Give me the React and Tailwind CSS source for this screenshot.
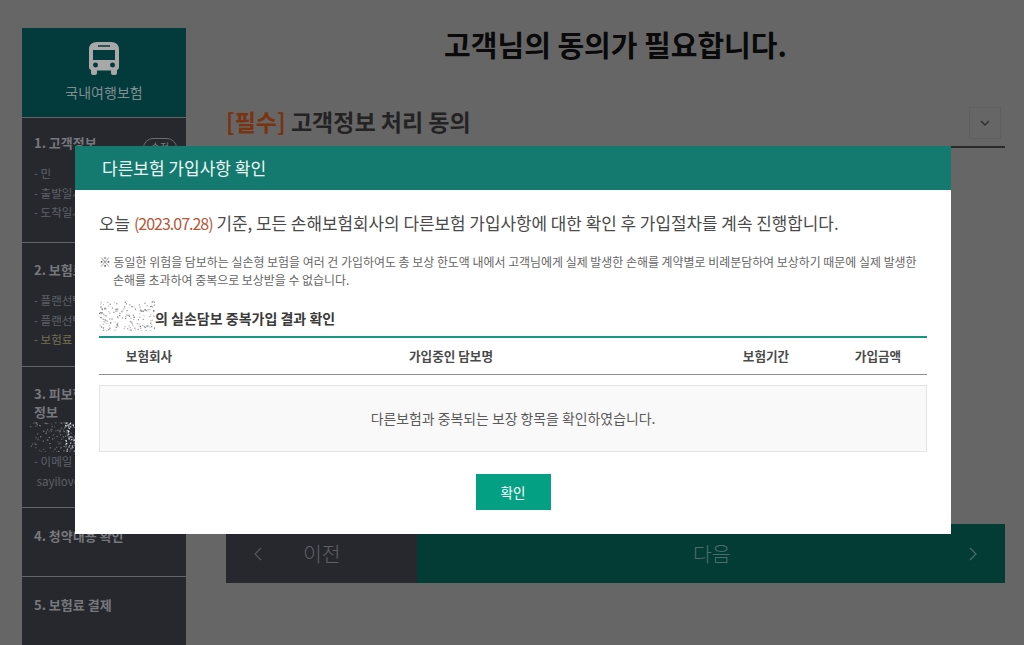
const FONT = "font-['Noto_Sans_CJK_KR','Noto_Sans',sans-serif]";

function Noise({ w, h, seed, className, color = "#666", n = 170 }) {
  const dots = [];
  let s = seed;
  const r = () => ((s = (s * 16807) % 2147483647) / 2147483647);
  for (let i = 0; i < n; i++) {
    dots.push(<rect key={i} x={r() * w} y={r() * h} width="1.2" height="1.2" fill={color} opacity={0.35 + r() * 0.65} />);
  }
  return (
    <svg width={w} height={h} className={className} aria-hidden="true">
      {dots}
    </svg>
  );
}

function Bus() {
  return (
    <svg width="30" height="33" viewBox="0 0 30 33" className="block">
      <path
        fillRule="evenodd"
        fill="#a8a8a8"
        d="M8 0H22C27 0 30 3 30 7V25C30 26.5 29.3 27.5 28 28V31C28 32.2 27.2 33 26 33H24C22.8 33 22 32.2 22 31V28.5H8V31C8 32.2 7.2 33 6 33H4C2.8 33 2 32.2 2 31V28C.7 27.500 0 26.5 0 25V7C0 3 3 0 8 0ZM9 3.200V4.800H21V3.200ZM4 8V18H26V8ZM6.500 20.500A2.500 2.500 0 1 0 6.510 25.500A2.500 2.500 0 1 0 6.500 20.500ZM23.500 20.500A2.500 2.500 0 1 0 23.510 25.500A2.500 2.500 0 1 0 23.500 20.500Z"
      />
    </svg>
  );
}

function Section({ className, children }) {
  return <div className={`border-t border-[#62646a] pl-3 pr-2 ${className}`}>{children}</div>;
}

function Item({ children, className = "text-[#5f6167]" }) {
  return <p className={`text-[11.5px] leading-[19.5px] whitespace-nowrap ${className}`}>{children}</p>;
}

function SectionTitle({ children }) {
  return <h3 className="text-[13px] leading-[18px] font-bold text-[#77787c]">{children}</h3>;
}

export default function App() {
  return (
    <div className={`relative h-[645px] w-[1024px] overflow-hidden bg-[#666666] ${FONT}`}>
      <div className="flex h-full items-start gap-10 pl-[22px] pt-7">
        <aside className="flex h-[617px] w-[164px] shrink-0 flex-col bg-[#26282e]">
          <div className="flex h-[89px] flex-col items-center bg-[#033a3c] pt-[14px]">
            <Bus />
            <span className="mt-[7px] text-[14px] leading-[20px] text-[#7f8f90]">국내여행보험</span>
          </div>
          <Section className="h-[125px] pt-[16px]">
            <SectionTitle>1. 고객정보</SectionTitle>
            <div className="mt-[12px]">
              <Item>- 민</Item>
              <Item>- 출발일시</Item>
              <Item>- 도착일시</Item>
            </div>
          </Section>
          <Section className="h-[124px] pt-[18px]">
            <SectionTitle>2. 보험료</SectionTitle>
            <div className="mt-[12px]">
              <Item>- 플랜선택</Item>
              <Item>- 플랜선택</Item>
              <Item className="text-[#77704f]">- 보험료 :</Item>
            </div>
          </Section>
          <Section className="h-[141px] pt-[18px]">
            <SectionTitle>
              3. 피보험자
              <br />
              정보
            </SectionTitle>
            <Noise w={46} h={30} seed={77} color="#888" n={110} className="-ml-1 mt-[1px]" />
            <Item>- 이메일 :</Item>
            <Item>&nbsp;sayilove</Item>
          </Section>
          <Section className="h-[69px] pt-[19px]">
            <SectionTitle>4. 청약내용 확인</SectionTitle>
          </Section>
          <Section className="flex-1 pt-[19px]">
            <SectionTitle>5. 보험료 결제</SectionTitle>
          </Section>
        </aside>

        <main className="flex h-[555px] w-[779px] flex-col">
          <h1 className="text-center text-[29px] font-bold leading-[32px] text-[#0a0a0a]">
            고객님의 동의가 필요합니다.
          </h1>
          <div className="mt-[40px] flex h-[48px] items-center justify-between border-b-2 border-[#2a2a2a] pr-[4px]">
            <h2 className="mb-1 text-[23px] font-bold leading-[30px] text-[#232323]">
              <span className="text-[#7a3311]">[필수]</span> 고객정보 처리 동의
            </h2>
            <div className="flex h-[32px] w-[32px] items-center justify-center border border-[#5f5f5f] bg-[#666666]">
              <svg width="10" height="7" viewBox="0 0 10 7" fill="none" stroke="#2d2d2d" strokeWidth="1.300">
                <path d="M1 1L5 5L9 1" />
              </svg>
            </div>
          </div>
          <div className="mt-auto flex h-[59px] text-[20.5px] font-light text-[#5f6266]">
            <div className="flex w-[191px] items-center bg-[#26282e] pl-7">
              <svg width="8" height="14" viewBox="0 0 8 14" fill="none" stroke="#55575c" strokeWidth="1.200">
                <path d="M7 1L1 7L7 13" />
              </svg>
              <span className="ml-[41px]">이전</span>
            </div>
            <div className="flex flex-1 items-center bg-[#023c34] pr-7 text-[#4c6f69]">
              <span className="ml-[276px]">다음</span>
              <svg width="8" height="14" viewBox="0 0 8 14" fill="none" stroke="#4c6f69" strokeWidth="1.200" className="ml-auto">
                <path d="M1 1L7 7L1 13" />
              </svg>
            </div>
          </div>
        </main>
      </div>

      <span className="absolute left-[143px] top-[138px] h-[20px] w-[34px] rounded-full border border-[#6a6c70] text-center text-[10px] leading-[16px] text-[#77787c]">
        수정
      </span>

      <section className="absolute left-[75px] top-[146px] flex h-[388px] w-[876px] flex-col bg-white">
        <header className="flex h-[44px] shrink-0 items-center bg-[#147a70] pl-[27px] text-[17px] text-[#eef7f5]">
          다른보험 가입사항 확인
        </header>
        <div className="flex flex-1 flex-col px-[24px]">
          <p className="mt-[21px] whitespace-nowrap text-[16.9px] leading-[24px] text-[#4a4a4a]">
            오늘 <span className="text-[16px] tracking-[-1px] text-[#b5583a]">(2023.07.28)</span> 기준, 모든 손해보험회사의 다른보험 가입사항에 대한 확인 후 가입절차를 계속 진행합니다.
          </p>
          <p className="mt-[18px] whitespace-nowrap pl-[14px] -indent-[14px] text-[11.95px] leading-[18px] text-[#666]">
            ※ 동일한 위험을 담보하는 실손형 보험을 여러 건 가입하여도 총 보상 한도액 내에서 고객님에게 실제 발생한 손해를 계약별로 비례분담하여 보상하기 때문에 실제 발생한
            <br />
            손해를 초과하여 중복으로 보상받을 수 없습니다.
          </p>
          <div className="relative mt-[18px] flex h-[31px] items-center border-b-2 border-[#199583] pl-[56px] pb-[8px] text-[14px] font-bold leading-[20px] text-[#3a3a3a]">
            <Noise w={56} h={30} seed={41} color="#777" className="absolute -top-[6px] left-0" />
            의 실손담보 중복가입 결과 확인
          </div>
          <div className="flex h-[37px] items-center border-b border-[#8f8f8f] text-center text-[12.6px] font-bold text-[#4a4a4a]">
            <span className="w-[100px]">보험회사</span>
            <span className="w-[504px]">가입중인 담보명</span>
            <span className="w-[126px]">보험기간</span>
            <span className="w-[98px]">가입금액</span>
          </div>
          <div className="mt-[10px] flex h-[67px] items-center justify-center border border-[#e4e4e4] bg-[#f9f9f9] text-[13.9px] text-[#5a5a5a]">
            다른보험과 중복되는 보장 항목을 확인하였습니다.
          </div>
          <button className="mx-auto mt-[22px] h-[36px] w-[75px] bg-[#04a084] text-[13.5px] text-white">확인</button>
        </div>
      </section>

      <Noise w={14} h={30} seed={913} color="#fff" n={70} className="absolute left-[65px] top-[422px]" />
    </div>
  );
}
